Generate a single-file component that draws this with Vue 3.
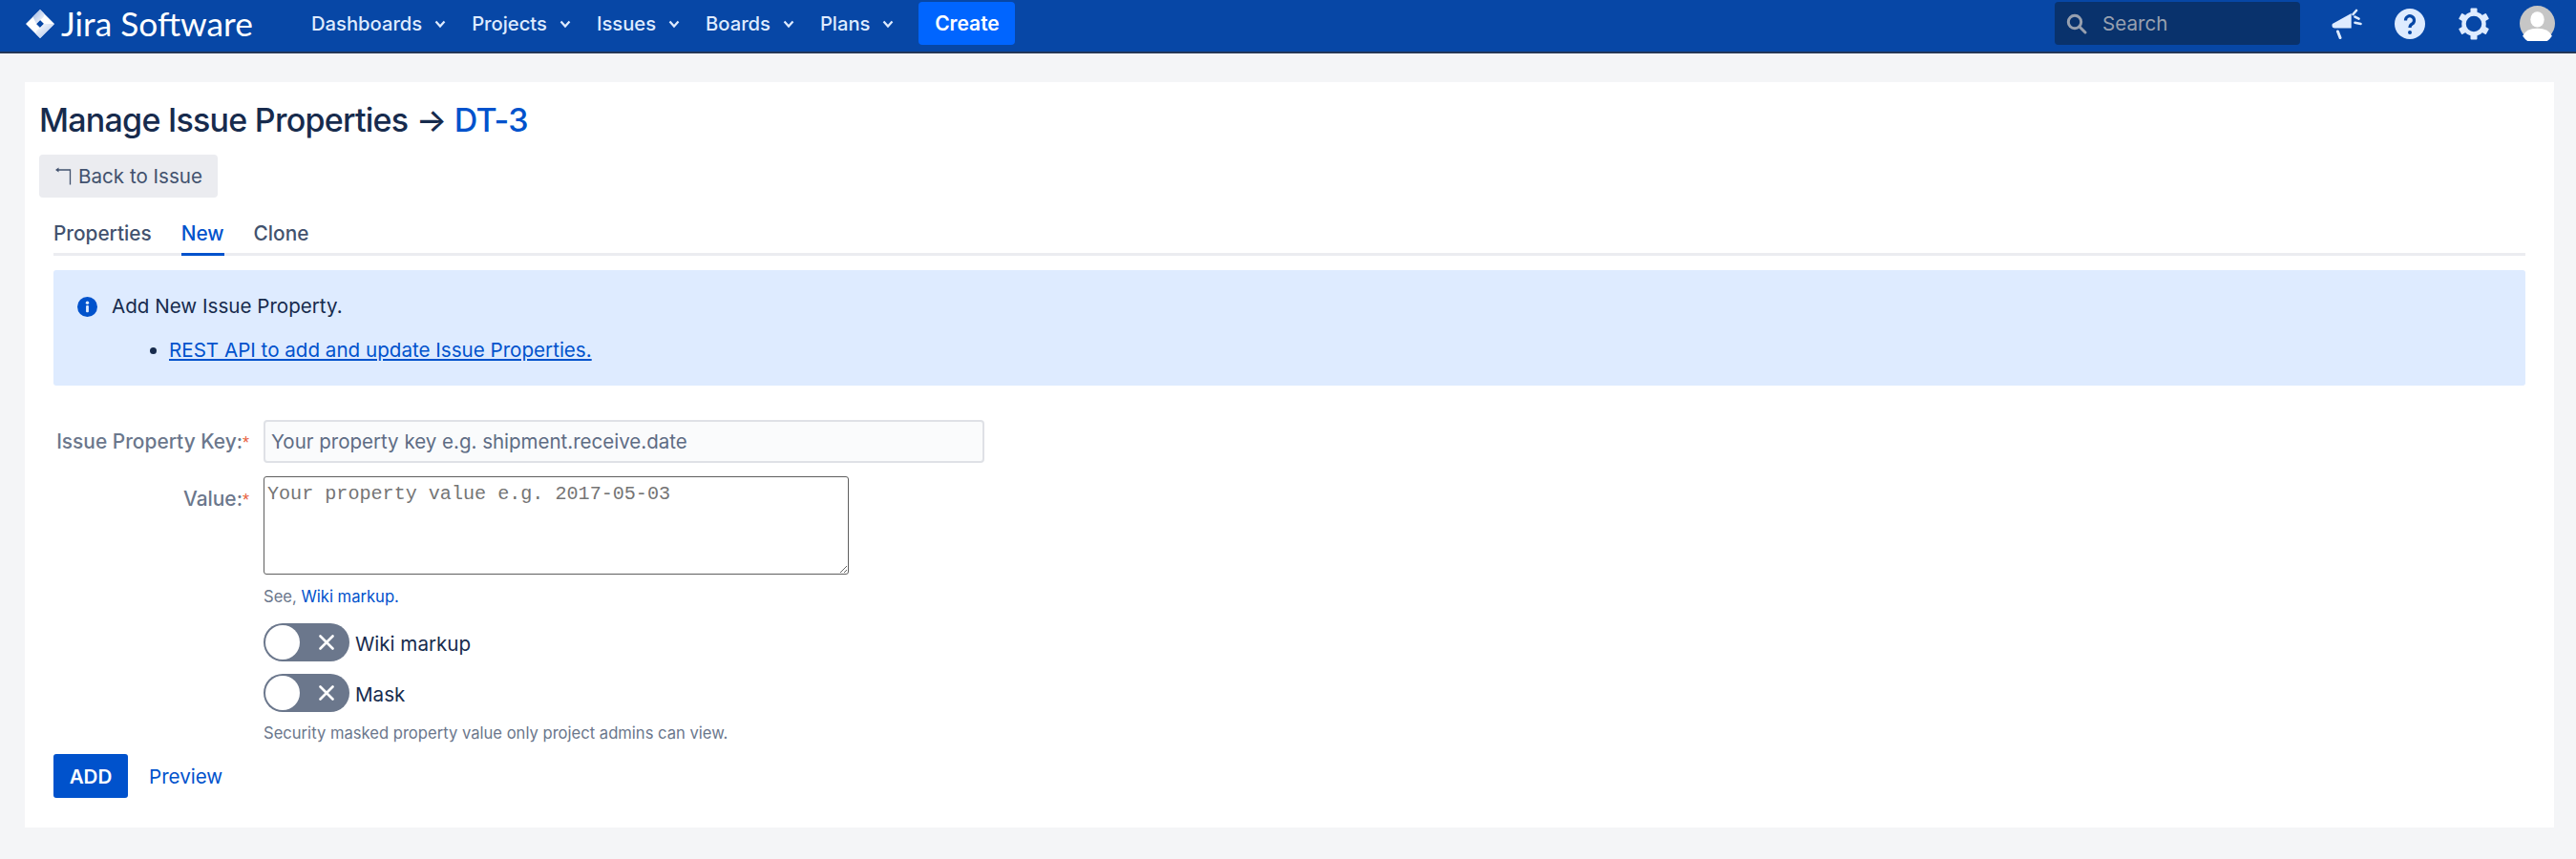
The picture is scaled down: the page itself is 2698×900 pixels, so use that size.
<script setup>
const navItems = ['Dashboards', 'Projects', 'Issues', 'Boards', 'Plans']
const tabs = [
  { label: 'Properties', active: false },
  { label: 'New', active: true },
  { label: 'Clone', active: false }
]
const toggles = ['Wiki markup', 'Mask']
</script>

<template>
  <div class="page">
    <header class="topbar">
      <div class="logo">
        <svg class="logo-mark" viewBox="0 0 30 30" width="30" height="30">
          <defs>
            <linearGradient id="lg" x1="0" y1="0" x2="1" y2="1">
              <stop offset="0" stop-color="#ffffff" />
              <stop offset="1" stop-color="#a9c0e8" />
            </linearGradient>
            <linearGradient id="lg2" x1="0" y1="0" x2="1" y2="1">
              <stop offset="0" stop-color="#9db6e2" />
              <stop offset="1" stop-color="#ffffff" />
            </linearGradient>
          </defs>
          <path d="M15 0 L30 15 L15 30 L0 15 Z M15 11 L11 15 L15 19 L19 15 Z" fill="#fff" fill-rule="evenodd" />
          <path d="M15 0 L19 4 Q21 7 15 11 L11 15 L7.5 7.5 Z" fill="url(#lg2)" />
          <path d="M19 15 L30 15 L15 30 L11 26 Q9 23 15 19 Z" fill="url(#lg)" />
        </svg>
        <span class="logo-text">Jira Software</span>
      </div>
      <nav class="nav">
        <a v-for="item in navItems" :key="item" class="nav-item">
          {{ item }}
          <svg width="12" height="12" viewBox="0 0 12 12"><path d="M1.5 3.5 L6 8.5 L10.5 3.5" fill="none" stroke="#deebff" stroke-width="2.2" /></svg>
        </a>
      </nav>
      <button class="create">Create</button>
      <div class="spacer"></div>
      <div class="search">
        <svg width="22" height="22" viewBox="0 0 22 22"><circle cx="9" cy="9" r="6.7" fill="none" stroke="#97a0af" stroke-width="3" /><path d="M14 14 L20 20" stroke="#97a0af" stroke-width="3" stroke-linecap="round" /></svg>
        <span>Search</span>
      </div>
      <div class="icons">
        <svg width="32" height="32" viewBox="0 8 32 32"><path d="M0.8 24 L20.7 13 V28.5 H3 Q-0.5 28 0.8 24 Z" fill="#deebff" /><path d="M6.5 32 L9 38.5" stroke="#deebff" stroke-width="3" stroke-linecap="round" /><path d="M22.5 14 L26 10 M24.5 16.7 L28.5 18.7 M24.5 22.7 L30.5 24" stroke="#deebff" stroke-width="2.6" stroke-linecap="round" /></svg>
        <svg width="32" height="32" viewBox="0 0 32 32"><circle cx="16" cy="16" r="16" fill="#deebff" /><path d="M11.5 12.5 A4.5 4.5 0 1 1 18.5 16 Q16 17.3 16 20" fill="none" stroke="#0747a6" stroke-width="3.2" /><circle cx="16" cy="25" r="2" fill="#0747a6" /></svg>
        <svg class="gear" width="32" height="34" viewBox="0 0 32 34"><circle cx="16" cy="17" r="10.5" fill="none" stroke="#deebff" stroke-width="4.5" /><g fill="#deebff"><rect x="12.5" y="0.5" width="7" height="6" rx="1" /><rect x="12.5" y="27.5" width="7" height="6" rx="1" /><rect x="12.5" y="0.5" width="7" height="6" rx="1" transform="rotate(60 16 17)" /><rect x="12.5" y="0.5" width="7" height="6" rx="1" transform="rotate(120 16 17)" /><rect x="12.5" y="0.5" width="7" height="6" rx="1" transform="rotate(240 16 17)" /><rect x="12.5" y="0.5" width="7" height="6" rx="1" transform="rotate(300 16 17)" /></g></svg>
        <div class="avatar">
          <svg width="37" height="37" viewBox="0 0 36 36"><circle cx="18" cy="18" r="18" fill="#c6c6c6" /><ellipse cx="18" cy="14" rx="7" ry="8" fill="#fff" /><path d="M3 31 Q6 23 18 23 Q30 23 33 31 A18 18 0 0 1 3 31 Z" fill="#fff" /></svg>
        </div>
      </div>
    </header>

    <main class="panel">
      <h1 class="title">Manage Issue Properties → <a class="link">DT-3</a></h1>
      <button class="back">
        <svg width="17" height="19" viewBox="0 0 17 19"><path d="M2 3 H15.5 V18.5" fill="none" stroke="#42526e" stroke-width="1.3" /><path d="M0 3 L3.5 0.5 V5.5 Z" fill="#42526e" /></svg>
        Back to Issue
      </button>

      <div class="tabs">
        <a v-for="tab in tabs" :key="tab.label" class="tab" :class="{ active: tab.active }">{{ tab.label }}</a>
      </div>

      <section class="message">
        <div class="message-head">
          <svg width="21" height="21" viewBox="0 0 22 22"><circle cx="11" cy="11" r="11" fill="#0052cc" /><rect x="9.5" y="9.5" width="3" height="7.5" rx="1" fill="#deebff" /><circle cx="11" cy="6.5" r="1.8" fill="#deebff" /></svg>
          <span>Add New Issue Property.</span>
        </div>
        <ul class="message-list">
          <li><a>REST API to add and update Issue Properties.</a></li>
        </ul>
      </section>

      <form class="form" @submit.prevent>
        <div class="row row-key">
          <label>Issue Property Key:<i>*</i></label>
          <input class="key-input" type="text" placeholder="Your property key e.g. shipment.receive.date" />
        </div>
        <div class="row row-value">
          <label class="value-label">Value:<i>*</i></label>
          <div class="field">
            <textarea class="value-input" placeholder="Your property value e.g. 2017-05-03"></textarea>
            <p class="hint see">See, <a class="link">Wiki markup.</a></p>
            <div v-for="t in toggles" :key="t" class="toggle-row">
              <span class="toggle">
                <span class="knob"></span>
                <svg width="16" height="16" viewBox="0 0 16 16"><path d="M1.5 1.5 L14.5 14.5 M14.5 1.5 L1.5 14.5" stroke="#fff" stroke-width="2.6" stroke-linecap="round" /></svg>
              </span>
              <span class="toggle-label">{{ t }}</span>
            </div>
            <p class="hint security">Security masked property value only project admins can view.</p>
          </div>
        </div>
        <div class="actions">
          <button class="add">ADD</button>
          <a class="link preview">Preview</a>
        </div>
      </form>
    </main>
  </div>
</template>

<style>
html, body { margin: 0; background: #f4f5f7; }
</style>

<style scoped>
.page {
  width: 2698px;
  height: 900px;
  overflow: hidden;
  background: #f4f5f7;
  font-family: Inter, "Liberation Sans", sans-serif;
  color: #172b4d;
  font-size: 20.6px;
}
.topbar {
  box-sizing: border-box;
  height: 56px;
  background: #0747a6;
  border-bottom: 2px solid #253858;
  display: flex;
  align-items: center;
  padding: 0 22px 5px 27px;
}
.logo { display: flex; align-items: center; gap: 7px; width: 299px; flex: none; }
.logo-mark { flex: none; }
.logo-text { font-family: Lato, sans-serif; font-size: 35.3px; color: #fff; }
.nav { display: flex; gap: 27px; }
.nav-item { display: flex; align-items: center; gap: 13px; color: #deebff; font-size: 20.2px; font-weight: 500; }
.create {
  margin-left: 26px;
  width: 101px;
  height: 45px;
  background: #0065ff;
  color: #fff;
  border: 0;
  border-radius: 4px;
  font: 600 21px Inter, sans-serif;
}
.spacer { flex: 1; }
.search {
  box-sizing: border-box;
  width: 257px;
  height: 45px;
  border-radius: 4px;
  background: #09326c;
  display: flex;
  align-items: center;
  gap: 16px;
  padding-left: 12px;
  color: #97a0af;
}
.icons { display: flex; align-items: center; margin-left: 33px; gap: 34px; }
.gear { margin-left: 1px; }
.avatar { display: flex; margin-left: -2px; }
.panel {
  box-sizing: border-box;
  margin: 30px 23px 0 26px;
  height: 781px;
  background: #fff;
  padding: 20px 30px 0 15px;
}
.title { margin: 0; font-size: 34px; line-height: 40px; font-weight: 550; color: #172b4d; letter-spacing: -0.75px; }
.link { color: #0052cc; }
.back {
  margin-top: 16px;
  height: 45px;
  width: 187px;
  display: flex;
  align-items: center;
  gap: 7px;
  padding: 0 0 0 17px;
  border: 0;
  border-radius: 4px;
  background: #ebecf0;
  color: #42526e;
  font: 400 20.6px Inter, sans-serif;
}
.tabs {
  margin: 24px 0 0 15px;
  display: flex;
  gap: 31px;
  height: 34px;
  border-bottom: 3px solid #ebecf0;
  width: 2589px;
}
.tab { height: 37px; box-sizing: border-box; line-height: 28px; color: #42526e; font-weight: 500; font-size: 20.8px; }
.tab.active { color: #0052cc; border-bottom: 3px solid #0052cc; }
.message {
  box-sizing: border-box;
  margin: 15px 0 0 15px;
  width: 2589px;
  height: 121px;
  background: #deebff;
  border-radius: 3px;
  padding: 26px 0 0 25px;
}
.message-head { display: flex; align-items: center; gap: 15px; line-height: 24px; }
.message-list { margin: 22px 0 0; padding-left: 96px; line-height: 24px; }
.message-list a { color: #0052cc; text-decoration: underline; }
.form { margin-top: 36px; }
.row { display: flex; }
.row label {
  box-sizing: border-box;
  width: 220px;
  flex: none;
  text-align: right;
  color: #6b778c;
  font-weight: 500;
  font-size: 20.9px;
}
.row label i { color: #e8603c; font-style: normal; font-weight: 400; font-family: "Liberation Sans", sans-serif; font-size: 18px; }
.row-key { align-items: center; }
.key-input {
  box-sizing: border-box;
  margin-left: 15px;
  width: 755px;
  height: 45px;
  border: 2px solid #dfe1e6;
  border-radius: 4px;
  background: #fafbfc;
  padding: 0 6px;
  font: 400 20.5px Inter, sans-serif;
  outline: 0;
}
.key-input::placeholder { color: #5e6c84; opacity: 1; }
.row-value { margin-top: 14px; }
.value-label { padding-top: 11px; }
.field { margin-left: 15px; }
.value-input {
  display: block;
  box-sizing: border-box;
  width: 613px;
  height: 103px;
  border: 1px solid #5f5f5f;
  border-radius: 3px;
  padding: 6px 3px 2px;
  font: 400 20.1px "Liberation Mono", monospace;
  outline: 0;
}
.value-input::placeholder { color: #757575; opacity: 1; }
.hint { margin: 0; font-size: 16.6px; line-height: 20px; color: #6b778c; }
.see { margin-top: 13px; }
.toggle-row { display: flex; align-items: center; gap: 6px; margin-top: 13px; height: 40px; }
.see + .toggle-row { margin-top: 18px; }
.toggle {
  position: relative;
  box-sizing: border-box;
  width: 90px;
  height: 40px;
  border-radius: 20px;
  background: #6b778c;
  display: flex;
  align-items: center;
  justify-content: flex-end;
  padding-right: 16px;
}
.knob {
  position: absolute;
  left: 2px;
  top: 2px;
  width: 36px;
  height: 36px;
  border-radius: 50%;
  background: #fff;
}
.toggle-label { font-size: 20.6px; color: #172b4d; padding-top: 3px; }
.security { margin-top: 12px; }
.actions { display: flex; align-items: center; gap: 22px; margin: 12px 0 0 15px; }
.add {
  width: 78px;
  height: 46px;
  background: #0052cc;
  color: #fff;
  border: 0;
  border-radius: 3px;
  font: 600 20.6px Inter, sans-serif;
}
.preview { font-size: 20.6px; }
</style>
